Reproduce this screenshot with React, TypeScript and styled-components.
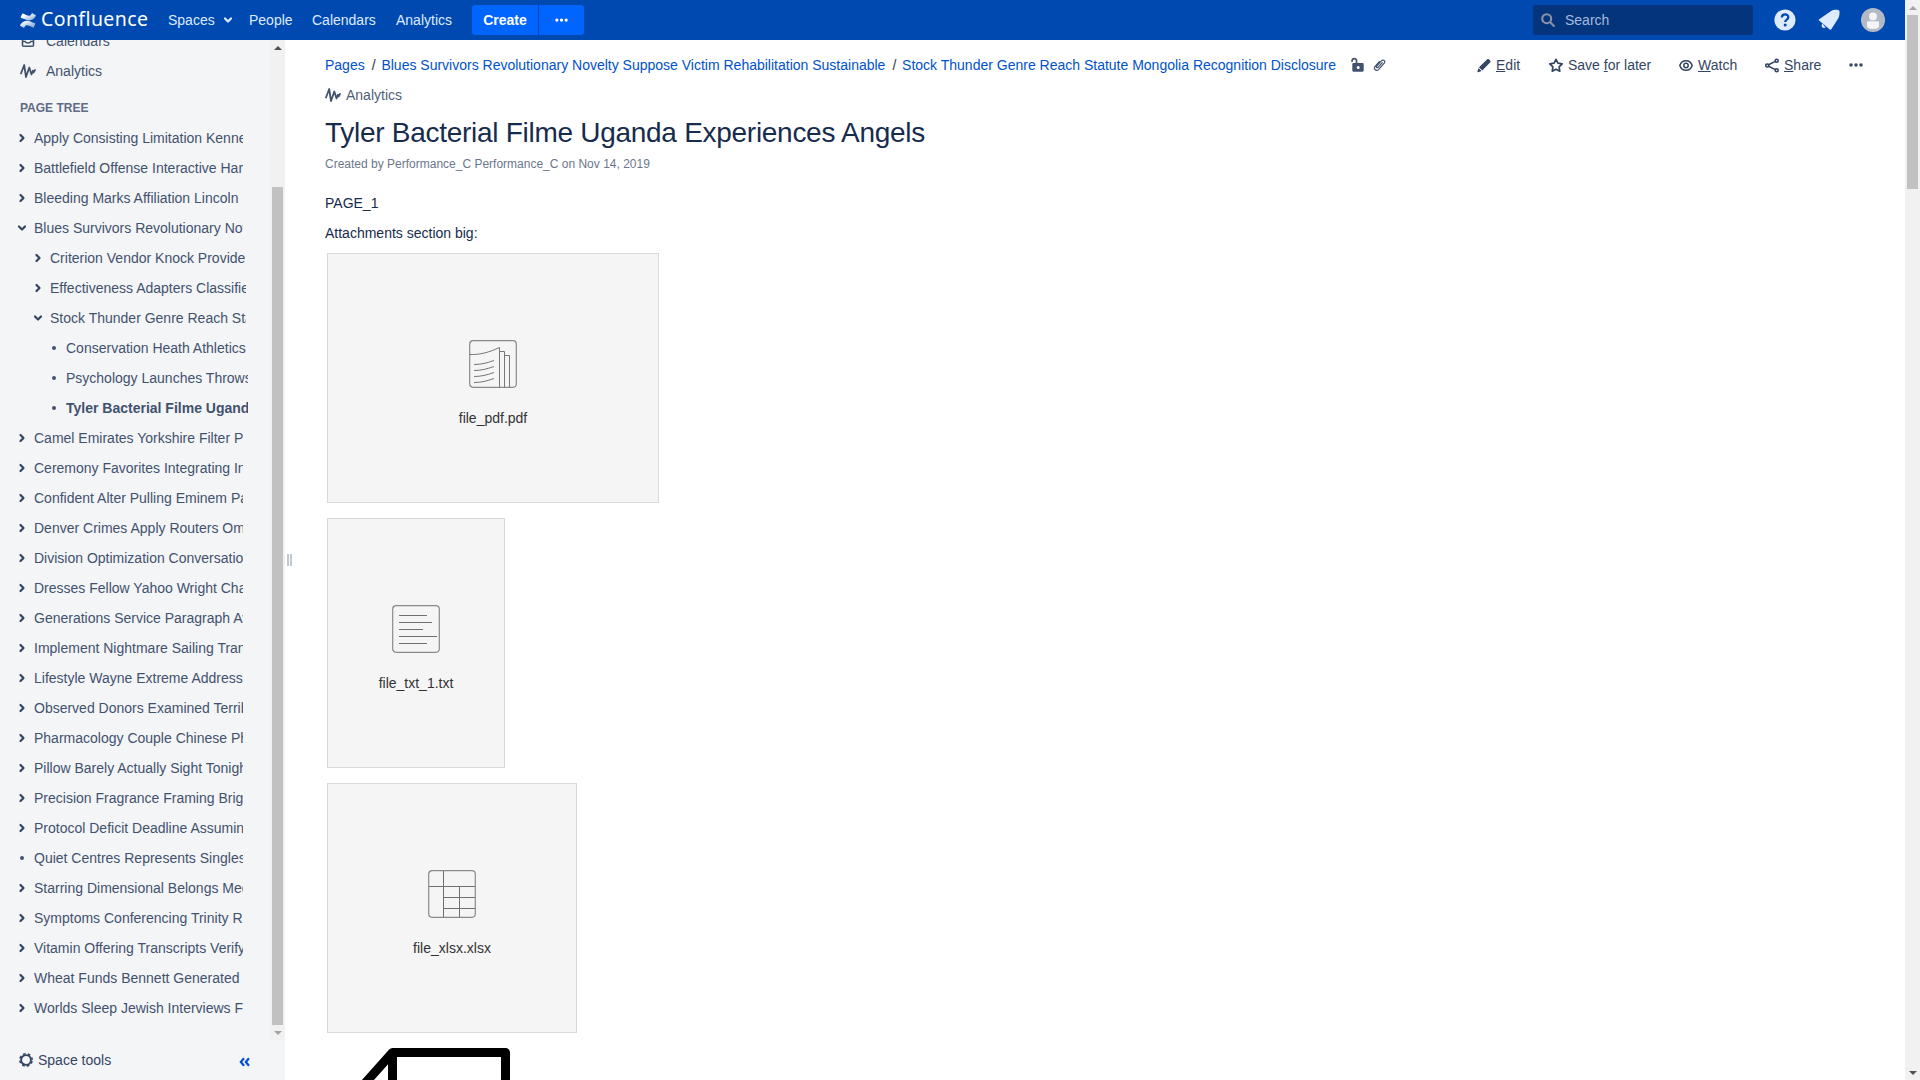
import React from "react";
import styled, { createGlobalStyle } from "styled-components";

const GlobalStyle = createGlobalStyle`
  *, *::before, *::after { box-sizing: border-box; }
  html, body { margin: 0; padding: 0; height: 100%; overflow: hidden; }
  body {
    font-family: "Liberation Sans", Arial, sans-serif;
    font-size: 14px;
    line-height: 20px;
    color: #172b4d;
    background: #fff;
  }
  svg { display: block; flex: none; }
`;

const Window = styled.div`
  display: flex;
  width: 1920px;
  height: 1080px;
  overflow: hidden;
`;

const Page = styled.div`
  display: flex;
  flex-direction: column;
  width: 1905px;
  height: 1080px;
`;

/* ---------- header ---------- */

const Header = styled.header`
  display: flex;
  align-items: center;
  flex: none;
  height: 40px;
  padding: 0 20px;
  background: #0049b0;
  color: #deebff;
`;

const Logo = styled.a`
  display: flex;
  align-items: center;
  gap: 5px;
  width: 148px;
  color: #fff;
`;

const LogoText = styled.span`
  font-family: "Noto Sans", "Open Sans", sans-serif;
  font-size: 19.5px;
  line-height: 24px;
  letter-spacing: 0.4px;
  margin-top: -2px;
`;

const NavItem = styled.a<{ $width: number }>`
  display: flex;
  align-items: center;
  gap: 5px;
  width: ${(p) => p.$width}px;
`;

const CreateGroup = styled.div`
  display: flex;
  gap: 1px;
  height: 30px;
  color: #fff;
  font-weight: bold;
`;

const CreateButton = styled.button<{ $width: number; $side: "left" | "right" }>`
  display: flex;
  align-items: center;
  justify-content: center;
  width: ${(p) => p.$width}px;
  padding: 0;
  border: 0;
  border-radius: ${(p) => (p.$side === "left" ? "3px 0 0 3px" : "0 3px 3px 0")};
  background: #0065ff;
  color: #fff;
  font: inherit;
`;

const HeaderRight = styled.div`
  display: flex;
  align-items: center;
  margin-left: auto;
`;

const SearchBox = styled.div`
  display: flex;
  align-items: center;
  gap: 10px;
  width: 220px;
  height: 30px;
  padding-left: 8px;
  border-radius: 3px;
  background: #04347c;
  color: #a5bbdc;
`;

const HeaderIcon = styled.span<{ $left: number }>`
  margin-left: ${(p) => p.$left}px;
`;

/* ---------- body ---------- */

const Body = styled.div`
  display: flex;
  flex: 1;
  min-height: 0;
`;

const Sidebar = styled.aside`
  display: flex;
  flex-direction: column;
  width: 285px;
  background: #f4f5f7;
  color: #42526e;
`;

const SidebarScroll = styled.div`
  display: flex;
  height: 1000px;
  overflow: hidden;
`;

const SidebarContent = styled.div`
  display: flex;
  flex-direction: column;
  width: 270px;
  margin-top: -14px;
`;

const SidebarLink = styled.a`
  display: flex;
  align-items: center;
  flex: none;
  gap: 10px;
  height: 30px;
  padding-left: 20px;
`;

const SidebarHeading = styled.h5`
  flex: none;
  margin: 12px 0 5px;
  padding-left: 20px;
  height: 20px;
  font-size: 12px;
  line-height: 20px;
  font-weight: bold;
  color: #5e6c84;
`;

const TreeRow = styled.div<{ $level: number; $current?: boolean }>`
  display: flex;
  align-items: center;
  flex: none;
  height: 30px;
  padding-left: ${(p) => 14 + p.$level * 16}px;
  font-weight: ${(p) => (p.$current ? "bold" : "normal")};
`;

const TreeMarker = styled.span`
  display: flex;
  flex: none;
  width: 20px;
`;

const TreeLabel = styled.span<{ $level: number }>`
  width: ${(p) => [209, 196, 182][p.$level]}px;
  overflow: hidden;
  white-space: nowrap;
`;

const SidebarFooter = styled.div`
  display: flex;
  align-items: center;
  height: 40px;
  padding: 0 35px 0 19px;
  gap: 5px;
  color: #344563;
`;

const CollapseIcon = styled.span`
  margin: 4px 0 0 auto;
`;

const Splitter = styled.div`
  display: flex;
  gap: 1px;
  width: 10px;
  padding: 514px 0 0 2px;

  &::before, &::after {
    content: "";
    width: 2px;
    height: 12px;
    background: #c1c7d0;
  }
`;

/* ---------- scroll bars ---------- */

const Track = styled.div`
  display: flex;
  flex-direction: column;
  align-items: center;
  flex: none;
  width: 15px;
  height: 100%;
  background: #f1f1f1;
`;

const ArrowBox = styled.span<{ $dir: "up" | "down"; $dark?: boolean }>`
  display: flex;
  align-items: center;
  justify-content: center;
  flex: none;
  width: 15px;
  height: 15px;

  &::before {
    content: "";
    border: 4px solid transparent;
    border-width: ${(p) => (p.$dir === "up" ? "0 4px 4px" : "4px 4px 0")};
    border-${(p) => (p.$dir === "up" ? "bottom" : "top")}-color: ${(p) => (p.$dark ? "#505050" : "#a3a3a3")};
  }
`;

const Thumb = styled.div<{ $before: number; $size: number }>`
  width: 11px;
  height: ${(p) => p.$size}px;
  margin-top: ${(p) => p.$before}px;
  margin-bottom: auto;
  background: #c1c1c1;
`;

/* ---------- main content ---------- */

const Main = styled.main`
  display: flex;
  flex-direction: column;
  flex: 1;
  min-width: 0;
  padding: 10px 40px 0 30px;
  overflow: hidden;
`;

const TopRow = styled.div`
  display: flex;
  align-items: center;
  flex: none;
  height: 30px;
`;

const Crumbs = styled.nav`
  display: flex;
  align-items: center;
  white-space: nowrap;
`;

const CrumbLink = styled.a`
  color: #0052cc;

  & + &::before {
    content: "/";
    display: inline-block;
    width: 16.700px;
    padding-left: 7px;
    color: #333;
  }
`;

const CrumbIcons = styled.span`
  display: flex;
  align-items: center;
  gap: 8px;
  margin-left: 14.500px;
  color: #42526e;
`;

const Actions = styled.div`
  display: flex;
  align-items: center;
  margin-left: auto;
  color: #344563;
`;

const Action = styled.a<{ $width: number }>`
  display: flex;
  align-items: center;
  gap: 5px;
  width: ${(p) => p.$width}px;
  white-space: nowrap;
`;

const AnalyticsLink = styled.a`
  display: flex;
  align-items: center;
  flex: none;
  gap: 5px;
  height: 30px;
  color: #505f79;
`;

const Title = styled.h1`
  flex: none;
  margin: 6px 0 0;
  font-size: 28px;
  line-height: 34px;
  font-weight: normal;
  letter-spacing: -0.28px;
  color: #172b4d;
`;

const Byline = styled.div`
  flex: none;
  margin-top: 4px;
  font-size: 12px;
  line-height: 20px;
  color: #6b778c;
`;

const Paragraph = styled.p<{ $top: number }>`
  flex: none;
  margin: ${(p) => p.$top}px 0 0;
`;

const FileList = styled.div`
  display: flex;
  flex-direction: column;
  align-items: flex-start;
  flex: none;
  gap: 15px;
  margin: 10px 0 0 2px;
`;

const FileCard = styled.div<{ $width: number }>`
  display: flex;
  flex-direction: column;
  align-items: center;
  gap: 20px;
  width: ${(p) => p.$width}px;
  height: 250px;
  padding-top: 86px;
  border: 1px solid #d9d9d9;
  background: #f5f5f5;
  color: #333;
`;

/* ---------- icons ---------- */

const ConfluenceMark = () => (
  <svg width="16" height="15" viewBox="0 0 24 24" preserveAspectRatio="none">
    <defs>
      <linearGradient id="markLow" x1="1" y1="1" x2="0.2" y2="0.3">
        <stop offset="0.2" stopColor="#fff" />
        <stop offset="1" stopColor="#fff" stopOpacity="0.6" />
      </linearGradient>
      <linearGradient id="markHigh" x1="0" y1="0" x2="0.8" y2="0.7">
        <stop offset="0.2" stopColor="#fff" stopOpacity="0.6" />
        <stop offset="1" stopColor="#fff" />
      </linearGradient>
    </defs>
    <path fill="url(#markHigh)" d="M.87 18.257c-.248.382-.53.875-.763 1.245a.764.764 0 0 0 .255 1.04l4.965 3.054a.764.764 0 0 0 1.058-.26c.199-.332.454-.763.733-1.221 1.967-3.247 3.945-2.853 7.508-1.146l4.957 2.337a.764.764 0 0 0 1.028-.382l2.364-5.346a.764.764 0 0 0-.382-1 599.851 599.851 0 0 1-4.965-2.361C10.911 10.97 5.224 11.185.87 18.257z" transform="rotate(180 12 12) scale(1 1)" />
    <path fill="url(#markLow)" d="M23.131 5.743c.249-.405.531-.875.764-1.25a.764.764 0 0 0-.256-1.034L18.675.404a.764.764 0 0 0-1.058.26c-.195.335-.451.763-.734 1.225-1.966 3.246-3.945 2.850-7.508 1.146L4.437.694a.764.764 0 0 0-1.027.382L1.046 6.422a.764.764 0 0 0 .382 1c1.039.49 3.105 1.467 4.965 2.361 6.698 3.246 12.392 3.029 16.738-4.040z" transform="rotate(180 12 12)" />
  </svg>
);

const ChevronRight = () => (
  <svg width="16" height="16" viewBox="0 0 16 16" fill="none" stroke="#344563" strokeWidth="2.200" strokeLinecap="round" strokeLinejoin="round">
    <path d="M6.500 5l3 3-3 3" />
  </svg>
);

const ChevronDown = ({ color = "#344563" }: { color?: string }) => (
  <svg width="16" height="16" viewBox="0 0 16 16" fill="none" stroke={color} strokeWidth="2.200" strokeLinecap="round" strokeLinejoin="round">
    <path d="M5 6.500l3 3 3-3" />
  </svg>
);

const Bullet = () => (
  <svg width="16" height="16" viewBox="0 0 16 16">
    <circle cx="8" cy="8" r="2" fill="#42526e" />
  </svg>
);

const Dots = ({ size = 14 }: { size?: number }) => (
  <svg width={size} height="4" viewBox="0 0 14 4" fill="currentColor">
    <circle cx="2" cy="2" r="1.750" />
    <circle cx="7" cy="2" r="1.750" />
    <circle cx="12" cy="2" r="1.750" />
  </svg>
);

const PulseIcon = () => (
  <svg width="16" height="16" viewBox="0 0 16 16" fill="none" stroke="#42526e" strokeWidth="1.800" strokeLinecap="round" strokeLinejoin="round">
    <path d="M1 10.500L4.200 2l1.800 12L9.300 4.500l2.200 7 1.400-3.800.6 1.800L15 7" />
  </svg>
);

const TrayIcon = () => (
  <svg width="16" height="16" viewBox="0 0 16 16" fill="none" stroke="#42526e" strokeWidth="1.600">
    <rect x="2.500" y="1.500" width="11" height="11.800" rx="1" />
    <path d="M2.500 8.500h2.700c.8 2 4.800 2 5.600 0h2.700" />
  </svg>
);

const SearchIcon = () => (
  <svg width="14" height="14" viewBox="0 0 14 14" fill="none" stroke="#8993a4" strokeWidth="2.100" strokeLinecap="round">
    <circle cx="5.700" cy="5.700" r="4.500" />
    <path d="M9.200 9.200l3.700 3.700" />
  </svg>
);

const HelpIcon = () => (
  <svg width="22" height="22" viewBox="0 0 22 22">
    <circle cx="11" cy="11" r="10.600" fill="#deebff" />
    <path d="M7.900 8.500c0-4 6.400-4 6.400-.3 0 2.300-3.100 2.400-3.100 4.800" fill="none" stroke="#0049b0" strokeWidth="2.300" />
    <circle cx="11.200" cy="16" r="1.500" fill="#0049b0" />
  </svg>
);

const BellIcon = () => (
  <svg width="22" height="22" viewBox="0 0 22 22" fill="#deebff">
    <path d="M1.200 10.300L13.500 1.800C15 .8 18 .7 20 .9c1.200.1 1.500.6 1.500 1.600.1 3-.2 5.300-1.500 7.200L13.300 20.300c-.4.6-1 .6-1.500.1L1.100 11.500c-.5-.4-.4-.9.100-1.200z" />
    <path d="M4.800 14.600a2.300 2.300 0 1 0 3 3.300l-1.600-.7z" />
  </svg>
);

const Avatar = () => (
  <svg width="24" height="24" viewBox="0 0 24 24">
    <circle cx="12" cy="12" r="12" fill="#b3bac5" />
    <circle cx="12" cy="8.400" r="3.900" fill="#f4f5f7" />
    <path d="M6 14.500c0-.8.500-1.300 1.300-1.300h9.400c.8 0 1.300.500 1.300 1.300v3.800C17.500 20.500 15 21 12 21s-5.500-.5-6-2.700z" fill="#f4f5f7" />
  </svg>
);

const PencilIcon = () => (
  <svg width="14" height="15" viewBox="0 0 14 15" fill="currentColor">
    <path d="M10 1.400c.6-.6 1.500-.6 2.100 0l1 1c.6.6.6 1.500 0 2.100L5.300 12.400 2 9.200z" />
    <path d="M1.500 9.900l3.100 3.100-3.400 1.200c-.6.200-1-.2-.8-.8z" />
  </svg>
);

const StarIcon = () => (
  <svg width="14" height="15" viewBox="0.500 0 14 15" fill="none" stroke="currentColor" strokeWidth="1.700" strokeLinejoin="round">
    <path d="M7.500 1.300l1.900 3.900 4.300.6-3.100 3 .7 4.400-3.800-2-3.800 2 .7-4.400-3.100-3 4.300-.6z" />
  </svg>
);

const EyeIcon = () => (
  <svg width="14" height="15" viewBox="0.500 0 14 15" fill="none" stroke="currentColor" strokeWidth="1.500">
    <path d="M1.300 7.500C2.300 4.500 4.700 2.700 7.500 2.700s5.200 1.800 6.200 4.800c-1 3-3.400 4.800-6.200 4.800S2.300 10.500 1.300 7.500z" />
    <circle cx="7.500" cy="7.500" r="2.200" />
  </svg>
);

const ShareIcon = () => (
  <svg width="14" height="15" viewBox="0.300 0 14 15" fill="none" stroke="currentColor" strokeWidth="1.600">
    <circle cx="2.500" cy="7.500" r="1.500" />
    <circle cx="12" cy="2.700" r="1.500" />
    <circle cx="12" cy="12.300" r="1.500" />
    <path d="M3.900 6.800l6.700-3.400M3.900 8.200l6.700 3.400" />
  </svg>
);

const UnlockIcon = () => (
  <svg width="14" height="16" viewBox="0.500 0 14 16">
    <path d="M1.500 4.200C1.500 .8 6 .8 6 4v3" fill="none" stroke="currentColor" strokeWidth="1.700" strokeLinecap="round" />
    <path fillRule="evenodd" fill="currentColor" d="M3 6h9c.700 0 1.200.5 1.200 1.200v6.300c0 .7-.5 1.200-1.200 1.200H3c-.7 0-1.200-.5-1.200-1.200V7.200C1.800 6.500 2.300 6 3 6zm4.700 2.900a1.500 1.500 0 1 0 0 3 1.500 1.500 0 0 0 0-3z" />
  </svg>
);

const ClipIcon = () => (
  <svg width="13" height="14" viewBox="0 0 13 14" fill="none" stroke="currentColor" strokeWidth="1.200" strokeLinecap="round">
    <path d="M9.300 4.600L5.100 9.300c-1 1-2.300-.1-1.400-1.200l4.700-5.200c1.900-1.900 4.400.1 2.800 2.200l-5.400 6.200c-2.500 2.500-5.800-.2-3.700-2.900L6.400 3.700" />
  </svg>
);

const GearIcon = () => (
  <svg width="14" height="14" viewBox="0 0 14 14" fill="none" stroke="currentColor">
    <circle cx="7" cy="7" r="4.900" strokeWidth="1.900" />
    <circle cx="7" cy="7" r="6.200" strokeWidth="1.500" strokeDasharray="2.600 2.270" strokeDashoffset="3.740" />
  </svg>
);

const DoubleChevron = () => (
  <svg width="11" height="10" viewBox="0 0 11 10" fill="none" stroke="#0052cc" strokeWidth="2.200">
    <path d="M5 1.200L1.800 5 5 8.800M10 1.200L6.800 5 10 8.800" />
  </svg>
);

const PdfIcon = () => (
  <svg width="48" height="48" viewBox="0 0 48 48" fill="none" stroke="#777" strokeWidth="1">
    <rect x="0.700" y="0.700" width="46.600" height="46.600" rx="3.500" stroke="#8a8a8a" strokeWidth="1.200" />
    <path d="M.5 14.500C11 15 21 12 30.500 7.500V47.500" />
    <path d="M30.500 11.500h5V47.500M35.500 15.500h5V47.500" />
    <path d="M5 24.500c7 0 13-1.500 20-4M5 30.500c7 0 13-1.500 20-4M5 36.500c7 0 13-1.500 20-4M5 42.500c7 0 13-1.500 20-4" />
  </svg>
);

const TextIcon = () => (
  <svg width="48" height="48" viewBox="0 0 48 48" fill="none" stroke="#707070" strokeWidth="1">
    <rect x="0.700" y="0.700" width="46.600" height="46.600" rx="3.500" stroke="#8a8a8a" strokeWidth="1.200" />
    <path d="M7 10.500h28M7 17.500h33M7 24.500h24M7 31.500h38M7 38.500h28" />
  </svg>
);

const SheetIcon = () => (
  <svg width="48" height="48" viewBox="0 0 48 48" fill="none" stroke="#707070" strokeWidth="1">
    <rect x="0.700" y="0.700" width="46.600" height="46.600" rx="3.500" stroke="#8a8a8a" strokeWidth="1.200" />
    <path d="M15.500 1v46M1 16.500h46M31.500 16.500V47M15.500 27.500H47M15.500 38.500H47" />
  </svg>
);

const DocumentPicture = () => (
  <svg width="250" height="250" viewBox="0 0 250 250" fill="none" stroke="#000" strokeWidth="9" strokeLinejoin="round">
    <path d="M19.500 56L65.500 4.500H178.500V230H19.500z" />
    <path d="M65.500 4.500V56H19.500" />
  </svg>
);

/* ---------- data ---------- */

type Marker = "closed" | "open" | "leaf";

const tree: [number, Marker, string][] = [
  [0, "closed", "Apply Consisting Limitation Kenne"],
  [0, "closed", "Battlefield Offense Interactive Har"],
  [0, "closed", "Bleeding Marks Affiliation Lincoln"],
  [0, "open", "Blues Survivors Revolutionary Nov"],
  [1, "closed", "Criterion Vendor Knock Provide"],
  [1, "closed", "Effectiveness Adapters Classifie"],
  [1, "open", "Stock Thunder Genre Reach Sta"],
  [2, "leaf", "Conservation Heath Athletics"],
  [2, "leaf", "Psychology Launches Throws"],
  [2, "leaf", "Tyler Bacterial Filme Ugand"],
  [0, "closed", "Camel Emirates Yorkshire Filter P"],
  [0, "closed", "Ceremony Favorites Integrating In"],
  [0, "closed", "Confident Alter Pulling Eminem Pa"],
  [0, "closed", "Denver Crimes Apply Routers Om"],
  [0, "closed", "Division Optimization Conversatio"],
  [0, "closed", "Dresses Fellow Yahoo Wright Cha"],
  [0, "closed", "Generations Service Paragraph Av"],
  [0, "closed", "Implement Nightmare Sailing Tran"],
  [0, "closed", "Lifestyle Wayne Extreme Address"],
  [0, "closed", "Observed Donors Examined Terrib"],
  [0, "closed", "Pharmacology Couple Chinese Ph"],
  [0, "closed", "Pillow Barely Actually Sight Tonigh"],
  [0, "closed", "Precision Fragrance Framing Brig"],
  [0, "closed", "Protocol Deficit Deadline Assumin"],
  [0, "leaf", "Quiet Centres Represents Singles"],
  [0, "closed", "Starring Dimensional Belongs Med"],
  [0, "closed", "Symptoms Conferencing Trinity R"],
  [0, "closed", "Vitamin Offering Transcripts Verify"],
  [0, "closed", "Wheat Funds Bennett Generated"],
  [0, "closed", "Worlds Sleep Jewish Interviews F"],
];

const markers: Record<Marker, React.ReactNode> = {
  closed: <ChevronRight />,
  open: <ChevronDown />,
  leaf: <Bullet />,
};

export default function App() {
  return (
    <Window>
      <GlobalStyle />
      <Page>
        <Header>
          <Logo>
            <ConfluenceMark />
            <LogoText>Confluence</LogoText>
          </Logo>
          <NavItem $width={81}>
            Spaces
            <ChevronDown color="#deebff" />
          </NavItem>
          <NavItem $width={63}>People</NavItem>
          <NavItem $width={84}>Calendars</NavItem>
          <NavItem $width={76}>Analytics</NavItem>
          <CreateGroup>
            <CreateButton $width={66} $side="left">Create</CreateButton>
            <CreateButton $width={45} $side="right"><Dots size={13} /></CreateButton>
          </CreateGroup>
          <HeaderRight>
            <SearchBox>
              <SearchIcon />
              Search
            </SearchBox>
            <HeaderIcon $left={21}><HelpIcon /></HeaderIcon>
            <HeaderIcon $left={22}><BellIcon /></HeaderIcon>
            <HeaderIcon $left={21}><Avatar /></HeaderIcon>
          </HeaderRight>
        </Header>
        <Body>
          <Sidebar>
            <SidebarScroll>
              <SidebarContent>
                <SidebarLink><TrayIcon />Calendars</SidebarLink>
                <SidebarLink><PulseIcon />Analytics</SidebarLink>
                <SidebarHeading>PAGE TREE</SidebarHeading>
                {tree.map(([level, marker, label]) => (
                  <TreeRow key={label} $level={level} $current={label.startsWith("Tyler")}>
                    <TreeMarker>{markers[marker]}</TreeMarker>
                    <TreeLabel $level={level}>{label}</TreeLabel>
                  </TreeRow>
                ))}
              </SidebarContent>
              <Track>
                <ArrowBox $dir="up" $dark />
                <Thumb $before={132} $size={838} />
                <ArrowBox $dir="down" />
              </Track>
            </SidebarScroll>
            <SidebarFooter>
              <GearIcon />
              Space tools
              <CollapseIcon><DoubleChevron /></CollapseIcon>
            </SidebarFooter>
          </Sidebar>
          <Splitter />
          <Main>
            <TopRow>
              <Crumbs>
                <CrumbLink>Pages</CrumbLink>
                <CrumbLink>Blues Survivors Revolutionary Novelty Suppose Victim Rehabilitation Sustainable</CrumbLink>
                <CrumbLink>Stock Thunder Genre Reach Statute Mongolia Recognition Disclosure</CrumbLink>
                <CrumbIcons><UnlockIcon /><ClipIcon /></CrumbIcons>
              </Crumbs>
              <Actions>
                <Action $width={72}><PencilIcon /><span><u>E</u>dit</span></Action>
                <Action $width={130}><StarIcon /><span>Save <u>f</u>or later</span></Action>
                <Action $width={86}><EyeIcon /><span><u>W</u>atch</span></Action>
                <Action $width={84}><ShareIcon /><span><u>S</u>hare</span></Action>
                <Action $width={16}><Dots /></Action>
              </Actions>
            </TopRow>
            <AnalyticsLink><PulseIcon />Analytics</AnalyticsLink>
            <Title>Tyler Bacterial Filme Uganda Experiences Angels</Title>
            <Byline>Created by Performance_C Performance_C on Nov 14, 2019</Byline>
            <Paragraph $top={19}>PAGE_1</Paragraph>
            <Paragraph $top={10}>Attachments section big:</Paragraph>
            <FileList>
              <FileCard $width={332}><PdfIcon />file_pdf.pdf</FileCard>
              <FileCard $width={178}><TextIcon />file_txt_1.txt</FileCard>
              <FileCard $width={250}><SheetIcon />file_xlsx.xlsx</FileCard>
              <DocumentPicture />
            </FileList>
          </Main>
        </Body>
      </Page>
      <Track>
        <ArrowBox $dir="up" />
        <Thumb $before={0} $size={174} />
        <ArrowBox $dir="down" $dark />
      </Track>
    </Window>
  );
}
